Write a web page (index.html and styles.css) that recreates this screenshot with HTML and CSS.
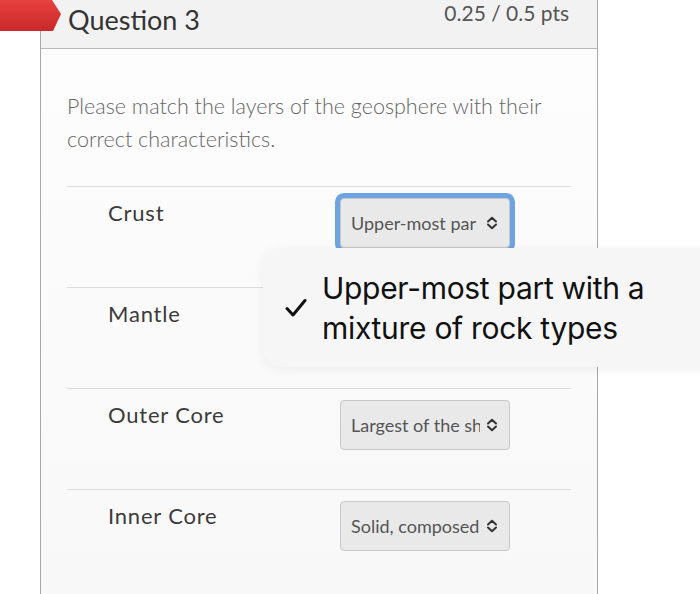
FILE: index.html
```html
<!DOCTYPE html>
<html lang="en">

<head>
  <meta charset="UTF-8">
  <meta name="viewport" content="width=device-width, initial-scale=1.0">
  <title>Question 3</title>
  <link rel="stylesheet" href="styles.css">
</head>

<body>
  <div class="flag"></div>

  <div class="card">
    <div class="card-header">
      <h2 class="title">Question 3</h2>
      <span class="points">0.25 / 0.5 pts</span>
    </div>

    <div class="card-body">
      <p class="prompt">Please match the layers of the geosphere with their correct characteristics.</p>

      <div class="match-list">
        <div class="match-row">
          <span class="label">Crust</span>
          <div class="select focused">
            <span class="select-text">Upper-most par</span>
            <svg class="chev" width="12" height="14" viewBox="0 0 12 14"><path d="M2 5.5 L6 1.8 L10 5.5 M2 8.5 L6 12.2 L10 8.5" fill="none" stroke="#333" stroke-width="2" stroke-linecap="round" stroke-linejoin="round"/></svg>
          </div>
        </div>
        <div class="match-row">
          <span class="label">Mantle</span>
        </div>
        <div class="match-row">
          <span class="label">Outer Core</span>
          <div class="select">
            <span class="select-text">Largest of the sh</span>
            <svg class="chev" width="12" height="14" viewBox="0 0 12 14"><path d="M2 5.5 L6 1.8 L10 5.5 M2 8.5 L6 12.2 L10 8.5" fill="none" stroke="#333" stroke-width="2" stroke-linecap="round" stroke-linejoin="round"/></svg>
          </div>
        </div>
        <div class="match-row">
          <span class="label">Inner Core</span>
          <div class="select">
            <span class="select-text">Solid, composed</span>
            <svg class="chev" width="12" height="14" viewBox="0 0 12 14"><path d="M2 5.5 L6 1.8 L10 5.5 M2 8.5 L6 12.2 L10 8.5" fill="none" stroke="#333" stroke-width="2" stroke-linecap="round" stroke-linejoin="round"/></svg>
          </div>
        </div>
      </div>
    </div>
  </div>

  <!-- native picker popup -->
  <div class="picker">
    <svg class="check" width="22" height="20" viewBox="0 0 22 20"><path d="M2 10.5 L8 17 L20 2.5" fill="none" stroke="#111" stroke-width="3" stroke-linecap="round" stroke-linejoin="round"/></svg>
    <span class="picker-text">Upper-most part with a mixture of rock types</span>
  </div>
</body>

</html>
```

FILE: styles.css
```css
body {
  margin: 0;
  background: #fff;
  font-family: Lato, "Liberation Sans", sans-serif;
  width: 700px;
  height: 594px;
  overflow: hidden;
}

.flag {
  position: absolute;
  left: 0;
  top: 0;
  width: 61px;
  height: 31px;
  background: linear-gradient(180deg, #e8413f 0%, #c9282a 100%);
  clip-path: polygon(0 0, 52px 0, 61px 14px, 53px 31px, 0 31px);
  z-index: 2;
}

.card {
  margin-left: 40px;
  width: 556px;
  min-height: 594px;
  border-left: 1px solid #a8a8a8;
  border-right: 1px solid #a8a8a8;
  background: linear-gradient(180deg, #fdfdfd 0%, #f8f8f8 100%);
}

.card-header {
  height: 48px;
  background: #f2f2f2;
  border-bottom: 1px solid #b9b9b9;
  display: flex;
  justify-content: space-between;
  align-items: flex-start;
  padding: 0 28px 0 27px;
}

.title {
  margin: 3px 0 0;
  font-size: 27px;
  font-weight: 400;
  color: #333;
}

.points {
  font-size: 21px;
  line-height: 25px;
  color: #555;
}

.card-body {
  padding: 41px 26px 0;
}

.prompt {
  margin: 0 0 30px;
  font-size: 21.5px;
  font-weight: 300;
  line-height: 33px;
  color: #666;
}

.match-row {
  height: 100px;
  border-top: 1px solid #dcdcdc;
  display: flex;
  align-items: flex-start;
}

.label {
  width: 232px;
  padding: 12px 0 0 41px;
  font-size: 22px;
  letter-spacing: 0.8px;
  color: #3c3c3c;
}

.select {
  margin-top: 11px;
  width: 170px;
  height: 50px;
  box-sizing: border-box;
  border: 1px solid #c8c8c8;
  border-radius: 4px;
  background: #e9e9e9;
  display: flex;
  align-items: center;
  padding: 0 11px 0 10px;
  gap: 6px;
}

.select.focused {
  box-shadow: 0 0 0 5px #6ea3e2;
}

.select-text {
  flex: 1;
  white-space: nowrap;
  overflow: hidden;
  font-size: 18px;
  color: #555;
}

.chev {
  flex: none;
}

.picker {
  position: absolute;
  left: 263px;
  top: 248px;
  width: 470px;
  height: 119px;
  box-sizing: border-box;
  border-radius: 18px;
  background: #f6f6f6;
  box-shadow: 0 2px 12px rgba(0, 0, 0, 0.06);
  display: flex;
  align-items: center;
  padding: 0 0 0 22px;
  gap: 15px;
  z-index: 3;
}

.check {
  flex: none;
}

.picker-text {
  width: 360px;
  font-family: Inter, "Liberation Sans", sans-serif;
  font-size: 30px;
  line-height: 40px;
  color: #111;
  letter-spacing: -0.3px;
}
```
